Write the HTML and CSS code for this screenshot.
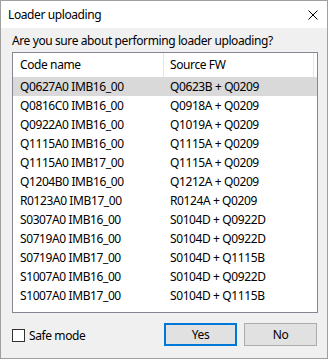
FILE: index.html
```html
<!DOCTYPE html>
<html lang="en">
<head>
    <meta charset="UTF-8">
    <title>Loader uploading</title>
    <link rel="stylesheet" href="styles.css">
</head>
<body>

    <div class="dialog">
        <div class="titlebar">
            <span class="title">Loader uploading</span>
            <svg class="close" width="10" height="10" viewBox="0 0 10 10">
                <path d="M0.5 0.5 L9.5 9.5 M9.5 0.5 L0.5 9.5" stroke="#000" stroke-width="1" fill="none"/>
            </svg>
        </div>

        <div class="content">
            <p class="question">Are you sure about performing loader uploading?</p>

            <!-- list of loaders -->
            <div class="listbox">
                <div class="row head">
                    <div class="cell">Code name</div>
                    <div class="cell">Source FW</div>
                </div>
                <div class="row selected">
                    <div class="cell">Q0627A0 IMB16_00</div>
                    <div class="cell">Q0623B + Q0209</div>
                </div>
                <div class="row">
                    <div class="cell">Q0816C0 IMB16_00</div>
                    <div class="cell">Q0918A + Q0209</div>
                </div>
                <div class="row">
                    <div class="cell">Q0922A0 IMB16_00</div>
                    <div class="cell">Q1019A + Q0209</div>
                </div>
                <div class="row">
                    <div class="cell">Q1115A0 IMB16_00</div>
                    <div class="cell">Q1115A + Q0209</div>
                </div>
                <div class="row">
                    <div class="cell">Q1115A0 IMB17_00</div>
                    <div class="cell">Q1115A + Q0209</div>
                </div>
                <div class="row">
                    <div class="cell">Q1204B0 IMB16_00</div>
                    <div class="cell">Q1212A + Q0209</div>
                </div>
                <div class="row">
                    <div class="cell">R0123A0 IMB17_00</div>
                    <div class="cell">R0124A + Q0209</div>
                </div>
                <div class="row">
                    <div class="cell">S0307A0 IMB16_00</div>
                    <div class="cell">S0104D + Q0922D</div>
                </div>
                <div class="row">
                    <div class="cell">S0719A0 IMB16_00</div>
                    <div class="cell">S0104D + Q0922D</div>
                </div>
                <div class="row">
                    <div class="cell">S0719A0 IMB17_00</div>
                    <div class="cell">S0104D + Q1115B</div>
                </div>
                <div class="row">
                    <div class="cell">S1007A0 IMB16_00</div>
                    <div class="cell">S0104D + Q0922D</div>
                </div>
                <div class="row">
                    <div class="cell">S1007A0 IMB17_00</div>
                    <div class="cell">S0104D + Q1115B</div>
                </div>
            </div>

            <div class="footer">
                <label class="safe">
                    <span class="checkbox"></span>
                    Safe mode
                </label>
                <div class="buttons">
                    <button class="btn default">Yes</button>
                    <button class="btn">No</button>
                </div>
            </div>
        </div>
    </div>

</body>
</html>
```

FILE: styles.css
```css
body {
    margin: 0;
    background: #fff;
    font-family: "Noto Sans", "Liberation Sans", sans-serif;
    font-size: 12px;
    letter-spacing: -0.4px;
    color: #000;
}
.dialog {
    width: 328px;
    height: 359px;
    box-sizing: border-box;
    border: 1px solid #a0a0a0;
    background: #f0f0f0;
    display: flex;
    flex-direction: column;
}
.titlebar {
    height: 27px;
    background: #fff;
    display: flex;
    align-items: center;
    justify-content: space-between;
    padding: 0 9px 0 7px;
}
.title {
    font-size: 12px;
    margin-top: -1px;
}
.close {
    margin-top: 1px;
}
.content {
    flex: 1;
    padding: 0 9px 0 11px;
}
.question {
    margin: 5px 0 3px;
    line-height: 16px;
}
.listbox {
    height: 261px;
    box-sizing: border-box;
    border: 1px solid #828790;
    background: #fff;
}
.row {
    display: grid;
    grid-template-columns: 151px 150px;
    height: 19px;
    line-height: 19px;
}
.row .cell {
    padding-left: 7px;
    white-space: nowrap;
}
.row .cell + .cell {
    padding-left: 6px;
}
.head {
    height: 24px;
    line-height: 23px;
}
.head .cell {
    border-right: 1px solid #e5e5e5;
}
.selected {
    background: #d9d9d9;
}
.footer {
    display: flex;
    align-items: center;
    justify-content: space-between;
    margin-top: 10px;
}
.safe {
    display: flex;
    align-items: center;
    gap: 4px;
    margin-top: 1px;
}
.checkbox {
    width: 11px;
    height: 11px;
    border: 1px solid #333;
    background: #fff;
}
.buttons {
    display: flex;
    gap: 7px;
    margin-right: 1px;
}
.btn {
    width: 73px;
    height: 23px;
    box-sizing: border-box;
    border: 1px solid #adadad;
    background: #e1e1e1;
    font-family: inherit;
    font-size: 12px;
    letter-spacing: -0.4px;
    color: #000;
    padding: 0;
}
.btn.default {
    border: 2px solid #0078d7;
}
```
